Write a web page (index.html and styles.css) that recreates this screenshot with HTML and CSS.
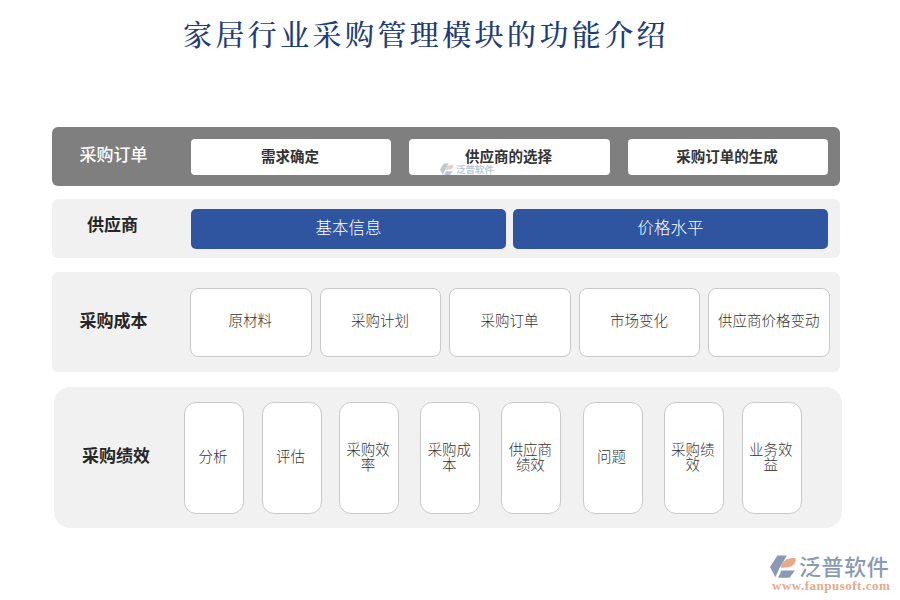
FILE: index.html
```html
<!DOCTYPE html>
<html lang="zh-CN">
<head>
<meta charset="utf-8">
<title>家居行业采购管理模块的功能介绍</title>
<link rel="stylesheet" href="styles.css">
</head>
<body>
<div class="page">
  <h1 class="title">家居行业采购管理模块的功能介绍</h1>

  <section class="panel panel-order">
    <div class="label label-light">采购订单</div>
    <div class="chips chips-order">
      <div class="chip chip-flat">需求确定</div>
      <div class="chip chip-flat">供应商的选择</div>
      <div class="chip chip-flat">采购订单的生成</div>
    </div>
    <div class="mark">
      <svg class="mark-icon" viewBox="0 0 40 36"><path d="M11 1H25L14 20 8 33 0 18Z" fill="#8b9ab3"/><path d="M16 19C18 8 27 3 38 5 39 14 33 20 16 19Z" fill="#e6a98a"/><path d="M12 34 17 23H37L29 34Z" fill="#8b9ab3"/></svg>
      <span class="mark-text">泛普软件</span>
    </div>
  </section>

  <section class="panel panel-supplier">
    <div class="label label-raised">供应商</div>
    <div class="chips chips-supplier">
      <div class="chip chip-blue">基本信息</div>
      <div class="chip chip-blue">价格水平</div>
    </div>
  </section>

  <section class="panel panel-cost">
    <div class="label">采购成本</div>
    <div class="chips chips-cost">
      <div class="chip chip-line">原材料</div>
      <div class="chip chip-line">采购计划</div>
      <div class="chip chip-line">采购订单</div>
      <div class="chip chip-line">市场变化</div>
      <div class="chip chip-line">供应商价格变动</div>
    </div>
  </section>

  <section class="panel panel-perf">
    <div class="label label-perf">采购绩效</div>
    <div class="chips chips-perf">
      <div class="chip chip-tall">分析</div>
      <div class="chip chip-tall">评估</div>
      <div class="chip chip-tall">采购效率</div>
      <div class="chip chip-tall chip-gap">采购成本</div>
      <div class="chip chip-tall chip-gap">供应商绩效</div>
      <div class="chip chip-tall chip-gap">问题</div>
      <div class="chip chip-tall chip-gap">采购绩效</div>
      <div class="chip chip-tall chip-end">业务效益</div>
    </div>
  </section>

  <div class="logo">
    <svg class="logo-icon" viewBox="0 0 40 36"><path d="M11 1H25L14 20 8 33 0 18Z" fill="#8b9ab3"/><path d="M16 19C18 8 27 3 38 5 39 14 33 20 16 19Z" fill="#e6a98a"/><path d="M12 34 17 23H37L29 34Z" fill="#8b9ab3"/></svg>
    <div class="logo-words">
      <div class="logo-name">泛普软件</div>
      <div class="logo-url">www.fanpusoft.com</div>
    </div>
  </div>
</div>
</body>
</html>
```
FILE: styles.css
```css
* { box-sizing: border-box; }
html, body { margin: 0; padding: 0; background: #fff; }
body { font-family: "Noto Sans CJK SC", "Liberation Sans", sans-serif; color: #333; }

.page { position: relative; width: 900px; height: 600px; overflow: hidden; padding: 15px 0 0 52px; }

.title {
  margin: 0 0 72px 131px;
  height: 40px;
  font-family: "Noto Serif CJK SC", "Liberation Serif", "Noto Sans CJK SC", serif;
  font-size: 29px;
  line-height: 38px;
  font-weight: 500;
  letter-spacing: 3.4px;
  color: #1f3d78;
  white-space: nowrap;
}

.panel { position: relative; display: flex; align-items: center; width: 788px; border-radius: 6px; background: #f1f1f1; }
.panel-order { height: 59px; background: #7f7f7f; margin-bottom: 13px; }
.panel-supplier { height: 59px; margin-bottom: 14px; }
.panel-cost { height: 100px; margin-bottom: 15px; }
.panel-perf { height: 141px; margin-left: 2px; border-radius: 16px; }

.label { flex: none; width: 123px; margin-right: 16px; margin-top: -5px; text-align: center; font-size: 17px; line-height: 24px; font-weight: 700; color: #262626; }
.label-light { color: #fff; font-weight: 500; }
.label-raised { margin-top: -9px; width: 121px; }
.label-perf { width: 124px; margin-right: 6px; }

.chips { display: flex; flex: none; }
.chip { display: flex; align-items: center; justify-content: center; text-align: center; font-size: 14.5px; line-height: 16px; color: #333; font-weight: 300; }

.chips-order { width: 637px; gap: 18.3px; margin-top: 1px; }
.chip-flat { flex: 1; height: 36px; padding: 0 2px 3px 0; background: #fff; border-radius: 4px; font-weight: 700; font-size: 14.5px; }

.chips-supplier { width: 637px; gap: 7px; margin-left: 2px; }
.chip-blue { flex: 1; height: 40px; padding-bottom: 4px; background: #2f54a0; border-radius: 5px; color: #fff; font-size: 16.5px; }

.chips-cost { width: 640px; gap: 8px; margin-left: -1px; margin-top: 1px; }
.chip-line { flex: 1; height: 69px; padding: 0 1px 5px 0; background: #fff; border: 1.5px solid #c9c9c9; border-radius: 8px; }

.chips-perf { gap: 17.5px; margin-top: 1px; }
.chip-tall { width: 60px; height: 112px; padding: 0 3px 4px 1px; line-height: 15.5px; background: #fff; border: 1.5px solid #c9c9c9; border-radius: 12px; }
.chip-gap { margin-left: 3.7px; }
.chip-end { margin-left: 0.5px; }

.mark { position: absolute; left: 388px; top: 36px; display: flex; align-items: center; gap: 2px; opacity: 0.55; }
.mark-icon { width: 14px; height: 13px; }
.mark-text { font-size: 9.5px; line-height: 13px; color: #8b9ab3; font-weight: 700; }

.logo { position: absolute; left: 770px; top: 554px; display: flex; gap: 2px; }
.logo-icon { width: 27px; height: 26px; }
.logo-words { display: flex; flex-direction: column; margin-top: -2px; }
.logo-name { font-size: 22px; line-height: 27px; letter-spacing: 0.6px; color: #8b9ab3; font-weight: 500; white-space: nowrap; }
.logo-url { margin: 0 0 0 -27px; font-family: "Liberation Serif", serif; font-size: 13px; line-height: 14px; letter-spacing: 0.5px; font-weight: 700; color: #e6a98a; white-space: nowrap; }
```
